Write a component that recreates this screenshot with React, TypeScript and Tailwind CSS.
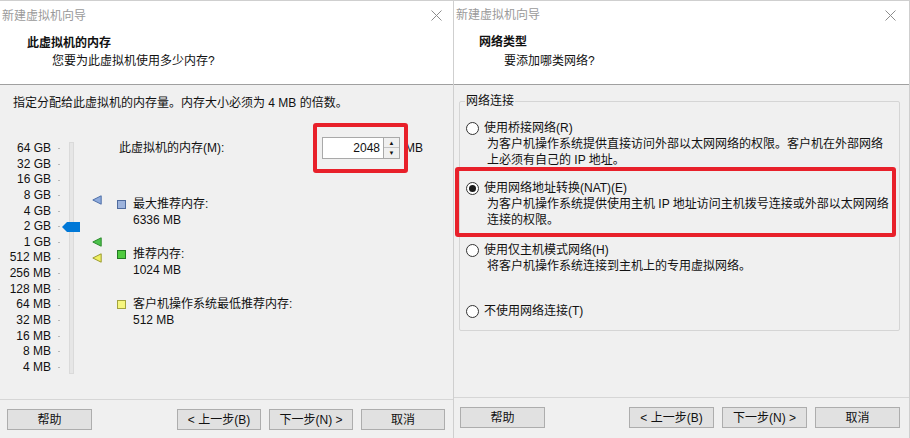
import type { ReactNode } from "react";

const FONT = "font-['Liberation_Sans','Noto_Sans_CJK_SC',sans-serif]";

const SCALE = [
  "64 GB",
  "32 GB",
  "16 GB",
  "8 GB",
  "4 GB",
  "2 GB",
  "1 GB",
  "512 MB",
  "256 MB",
  "128 MB",
  "64 MB",
  "32 MB",
  "16 MB",
  "8 MB",
  "4 MB",
];

function CloseIcon() {
  return (
    <svg width="11" height="11" viewBox="0 0 11 11" className="shrink-0">
      <path d="M0.5 0.5 L10.5 10.5 M10.5 0.5 L0.5 10.5" stroke="#8c8c8c" strokeWidth="1" />
    </svg>
  );
}

function Button({ children, width = "w-[85px]" }: { children: ReactNode; width?: string }) {
  return (
    <div
      className={`flex h-[21px] ${width} items-center justify-center border border-[#adadad] bg-[#e1e1e1] text-[12px] text-[#111]`}
    >
      {children}
    </div>
  );
}

function Marker({ fill, stroke, top }: { fill: string; stroke: string; top: string }) {
  return (
    <svg width="10" height="10" viewBox="0 0 10 10" className={`absolute left-[92px] ${top}`}>
      <polygon points="0.8,5 9.2,0.8 9.2,9.2" fill={fill} stroke={stroke} strokeWidth="1" />
    </svg>
  );
}

function Legend({
  fill,
  border,
  label,
  value,
  className = "",
}: {
  fill: string;
  border: string;
  label: string;
  value: string;
  className?: string;
}) {
  return (
    <div className={`flex ${className}`}>
      <div className={`mt-[4px] h-[9px] w-[9px] shrink-0 border ${fill} ${border}`} />
      <div className="ml-[7px] leading-[16px]">
        <div>{label}</div>
        <div>{value}</div>
      </div>
    </div>
  );
}

function Radio({ checked = false }: { checked?: boolean }) {
  return (
    <div className="flex h-[13px] w-[13px] shrink-0 items-center justify-center rounded-full border border-[#333] bg-white">
      {checked && <div className="h-[7px] w-[7px] rounded-full bg-[#1a1a1a]" />}
    </div>
  );
}

function MemoryDialog() {
  return (
    <div className="flex h-[438px] w-[453px] shrink-0 flex-col border-t border-[#cfcfcf] bg-[#f0f0f0]">
      <div className="h-[84px] border-b border-[#a0a0a0] bg-white">
        <div className="flex h-[29px] items-center justify-between pl-[2px] pr-[11px] text-[#9a9a9a]">
          <span>新建虚拟机向导</span>
          <CloseIcon />
        </div>
        <div className="mt-[5px] pl-[27px] font-bold leading-[16px]">此虚拟机的内存</div>
        <div className="mt-[2px] pl-[52px] leading-[16px]">您要为此虚拟机使用多少内存?</div>
      </div>

      <div className="flex-1">
        <div className="pl-[13px] pt-[10px] leading-[16px]">
          指定分配给此虚拟机的内存量。内存大小必须为 4 MB 的倍数。
        </div>

        <div className="mt-[30px] flex">
          <div className="relative w-[117px] shrink-0">
            {SCALE.map((s) => (
              <div key={s} className="flex h-[15.64px] items-center">
                <div className="w-[51px] text-right leading-[15.64px]">{s}</div>
                <div className="ml-[7px] h-px w-[2px] bg-[#b8b8b8]" />
              </div>
            ))}
            <div className="absolute left-[69px] top-[1px] h-[232px] w-[5px] border border-[#dadada] bg-[#e6e6e6]" />
            <svg width="18" height="10" viewBox="0 0 18 10" className="absolute left-[62px] top-[81px]">
              <polygon points="0,5 5,0 18,0 18,10 5,10" fill="#0078d7" />
            </svg>
            <Marker fill="#8eaadc" stroke="#4f70a8" top="top-[54px]" />
            <Marker fill="#4cc24c" stroke="#2b8a2b" top="top-[96px]" />
            <Marker fill="#f0f060" stroke="#9a9a30" top="top-[112px]" />
          </div>

          <div className="flex-1">
            <div className="-mt-[4px] flex h-[22px] items-center">
              <div className="w-[205px] shrink-0 pl-[2px]">此虚拟机的内存(M):</div>
              <div className="flex h-[22px] w-[62px] items-center justify-end border border-[#a9a9a9] bg-white pr-[3px]">
                2048
              </div>
              <div className="flex h-[22px] w-[16px] flex-col border border-l-0 border-[#a9a9a9] bg-[#f0f0f0]">
                <div className="flex h-1/2 items-center justify-center border-b border-[#c4c4c4] text-[6px] leading-none">▲</div>
                <div className="flex h-1/2 items-center justify-center text-[6px] leading-none">▼</div>
              </div>
              <div className="ml-[5px]">MB</div>
            </div>

            <Legend
              className="mt-[37px]"
              fill="bg-[#9db3dc]"
              border="border-[#4f6b9e]"
              label="最大推荐内存:"
              value="6336 MB"
            />
            <Legend
              className="mt-[18px]"
              fill="bg-[#4fcb3f]"
              border="border-[#237a23]"
              label="推荐内存:"
              value="1024 MB"
            />
            <Legend
              className="mt-[18px]"
              fill="bg-[#f6f67e]"
              border="border-[#a3a33d]"
              label="客户机操作系统最低推荐内存:"
              value="512 MB"
            />
          </div>
        </div>
      </div>

      <div className="flex h-[39px] justify-between border-t border-[#d6d6d6] pl-[7px] pr-[8px] pt-[9px]">
        <Button>帮助</Button>
        <div className="flex gap-[8px]">
          <Button width="w-[84px]">&lt; 上一步(B)</Button>
          <Button width="w-[84px]">下一步(N) &gt;</Button>
          <Button width="w-[84px]">取消</Button>
        </div>
      </div>
    </div>
  );
}

function NetworkDialog() {
  return (
    <div className="flex h-[438px] flex-1 flex-col border-l border-r border-t border-[#cfcfcf] bg-[#f0f0f0]">
      <div className="h-[84px] border-b border-[#a0a0a0] bg-white">
        <div className="flex h-[28px] items-center justify-between pl-[2px] pr-[13px] text-[#9a9a9a]">
          <span>新建虚拟机向导</span>
          <CloseIcon />
        </div>
        <div className="mt-[5px] pl-[25px] font-bold leading-[16px]">网络类型</div>
        <div className="mt-[3px] pl-[50px] leading-[16px]">要添加哪类网络?</div>
      </div>

      <div className="flex-1 pl-[5px] pr-[9px] pt-[8px]">
        <div className="relative mt-[8px] h-[230px] rounded-[2px] border border-[#d5d5d5]">
          <div className="absolute -top-[9px] left-[5px] bg-[#f0f0f0] px-[1px] leading-[16px]">网络连接</div>
          <div className="pl-[6px] pt-[18px] leading-[16px]">
            <div className="flex items-center gap-[5px]">
              <Radio />
              <span>使用桥接网络(R)</span>
            </div>
            <div className="pl-[21px]">
              <div>为客户机操作系统提供直接访问外部以太网网络的权限。客户机在外部网络</div>
              <div>上必须有自己的 IP 地址。</div>
            </div>

            <div className="mt-[12px] flex items-center gap-[5px]">
              <Radio checked />
              <span>使用网络地址转换(NAT)(E)</span>
            </div>
            <div className="pl-[21px]">
              <div>为客户机操作系统提供使用主机 IP 地址访问主机拨号连接或外部以太网网络</div>
              <div>连接的权限。</div>
            </div>

            <div className="mt-[14px] flex items-center gap-[5px]">
              <Radio />
              <span>使用仅主机模式网络(H)</span>
            </div>
            <div className="pl-[21px]">将客户机操作系统连接到主机上的专用虚拟网络。</div>

            <div className="mt-[29px] flex items-center gap-[5px]">
              <Radio />
              <span>不使用网络连接(T)</span>
            </div>
          </div>
        </div>
      </div>

      <div className="flex h-[41px] justify-between border-t border-[#d6d6d6] pl-[6px] pr-[9px] pt-[9px]">
        <Button>帮助</Button>
        <div className="flex gap-[8px]">
          <Button>&lt; 上一步(B)</Button>
          <Button>下一步(N) &gt;</Button>
          <Button>取消</Button>
        </div>
      </div>
    </div>
  );
}

export default function App() {
  return (
    <div className={`relative flex h-[438px] w-[910px] overflow-hidden bg-[#f0f0f0] text-[12px] text-[#111] ${FONT}`}>
      <MemoryDialog />
      <NetworkDialog />

      {/* red highlight annotations */}
      <div className="pointer-events-none absolute left-[313px] top-[123px] h-[50px] w-[95px] rounded-[3px] border-[4px] border-[#e8202a]" />
      <div className="pointer-events-none absolute left-[455px] top-[167px] h-[70px] w-[441px] rounded-[3px] border-[4px] border-[#e8202a]" />
    </div>
  );
}
